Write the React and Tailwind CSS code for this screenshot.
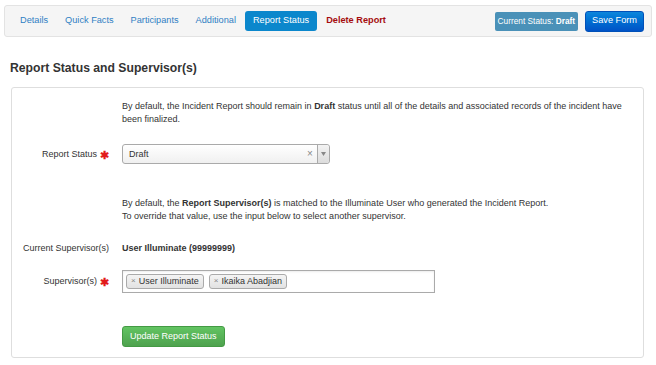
import React from "react";

function Star() {
  return <span className="text-[#e21b1b] font-bold text-[11px] leading-none ml-[3px] relative top-[1px]">✱</span>;
}

export default function App() {
  return (
    <div className="w-[656px] h-[365px] bg-white text-[#333] overflow-hidden font-['Liberation_Sans',Arial,sans-serif]">
      {/* Nav bar */}
      <div className="mt-[5px] mx-[4px] h-[32px] bg-[#f5f5f5] border border-[#e3e3e3] rounded-[3px] flex items-center pl-[7px] pr-[7px] text-[9.2px]">
        <div className="flex items-center gap-[1px]">
          <span className="px-[8px] py-[5px] text-[#2f7fc4]">Details</span>
          <span className="px-[8px] py-[5px] text-[#2f7fc4]">Quick Facts</span>
          <span className="px-[8px] py-[5px] text-[#2f7fc4]">Participants</span>
          <span className="px-[8px] py-[5px] text-[#2f7fc4]">Additional</span>
          <span className="px-[8px] h-[20px] flex items-center rounded-[3px] bg-[#0b87cc] text-white">Report Status</span>
          <span className="px-[8px] py-[5px] text-[#a50d0d] font-bold">Delete Report</span>
        </div>
        <div className="ml-auto flex items-center gap-[7px]">
          <span className="h-[19px] px-[3px] flex items-center rounded-[2px] bg-[#4a91b8] text-white text-[8.3px]">
            Current Status:&nbsp;<b>Draft</b>
          </span>
          <span className="h-[21px] px-[6px] flex items-center rounded-[3px] text-white bg-gradient-to-b from-[#0d86dc] to-[#0052c6] border border-[#0050b8]">
            Save Form
          </span>
        </div>
      </div>

      {/* Heading */}
      <h2 className="mt-[23px] ml-[10px] text-[12.2px] leading-[16px] font-bold text-[#333]">
        Report Status and Supervisor(s)
      </h2>

      {/* Panel */}
      <div className="mt-[11px] ml-[11px] w-[633px] h-[271px] border border-[#dedede] rounded-[3px] text-[9px] leading-[12.5px]">
        <div className="grid grid-cols-[97px_1fr] gap-x-[13px] pt-[12px]">
          <div />
          <p className="pr-[10px]">
            By default, the Incident Report should remain in <b>Draft</b> status until all of the details and associated records of the incident have been finalized.
          </p>

          <div className="mt-[19px] flex items-center justify-end h-[20px]">
            Report Status<Star />
          </div>
          <div className="mt-[19px]">
            <div className="w-[208px] h-[20px] border border-[#aaa] rounded-[3px] flex items-stretch bg-gradient-to-b from-white to-[#f0f0f0] shadow-[inset_0_1px_0_#fff]">
              <span className="flex-1 flex items-center pl-[6px]">Draft</span>
              <span className="w-[14px] flex items-center justify-center text-[#888] text-[10px]">×</span>
              <span className="w-[12px] border-l border-[#aaa] flex items-center justify-center bg-gradient-to-b from-[#f3f3f3] to-[#dcdcdc] rounded-r-[3px]">
                <svg width="5" height="4" viewBox="0 0 5 4"><path d="M0 0h5L2.5 4z" fill="#888" /></svg>
              </span>
            </div>
          </div>

          <div />
          <p className="mt-[33px]">
            By default, the <b>Report Supervisor(s)</b> is matched to the Illuminate User who generated the Incident Report.
            <br />
            To override that value, use the input below to select another supervisor.
          </p>

          <div className="mt-[20px] text-right">Current Supervisor(s)</div>
          <div className="mt-[20px] font-bold">User Illuminate (99999999)</div>

          <div className="mt-[15px] h-[23px] flex items-center justify-end">
            Supervisor(s)<Star />
          </div>
          <div className="mt-[15px]">
            <div className="w-[313px] h-[23px] border border-[#aaa] bg-white flex items-center gap-[5px] pl-[3px] shadow-[inset_0_1px_2px_rgba(0,0,0,0.08)]">
              <span className="h-[15px] flex items-center px-[4px] border border-[#aaa] rounded-[3px] bg-gradient-to-b from-[#f4f4f4] to-[#e2e2e2]">
                <span className="text-[#888] text-[8px] mr-[3px]">×</span>User Illuminate
              </span>
              <span className="h-[15px] flex items-center px-[4px] border border-[#aaa] rounded-[3px] bg-gradient-to-b from-[#f4f4f4] to-[#e2e2e2]">
                <span className="text-[#888] text-[8px] mr-[3px]">×</span>Ikaika Abadjian
              </span>
            </div>
          </div>

          <div />
          <div className="mt-[33px]">
            <span className="inline-flex items-center h-[21px] px-[7px] rounded-[3px] text-white bg-gradient-to-b from-[#62c462] to-[#4ea24e] border border-[#449a44]">
              Update Report Status
            </span>
          </div>
        </div>
      </div>
    </div>
  );
}
